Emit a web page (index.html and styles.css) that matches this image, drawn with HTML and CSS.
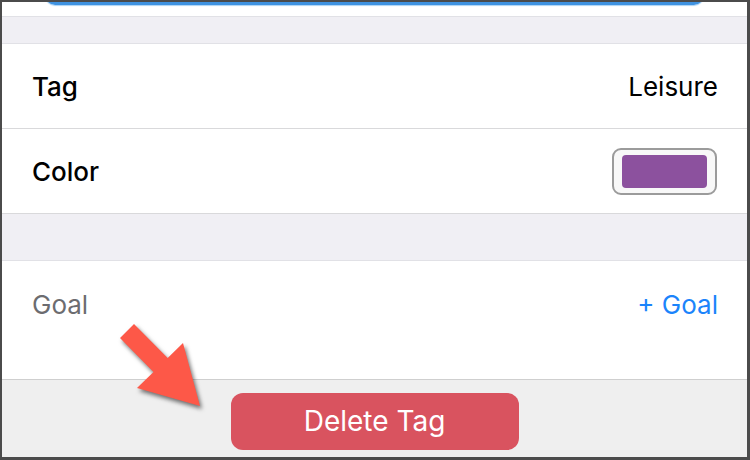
FILE: index.html
```html
<!DOCTYPE html>
<html>
<head>
<meta charset="utf-8">
<link rel="stylesheet" href="styles.css">
</head>
<body>
<div class="frame">
  <div class="top-strip"><div class="field"></div></div>
  <div class="band band-small"></div>
  <div class="row">
    <span class="label">Tag</span>
    <span class="value">Leisure</span>
  </div>
  <div class="row">
    <span class="label">Color</span>
    <span class="swatch"><span class="swatch-fill"></span></span>
  </div>
  <div class="band band-large"></div>
  <div class="row row-goal">
    <span class="label-muted">Goal</span>
    <span class="link">+ Goal</span>
  </div>
  <div class="toolbar">
    <button class="delete">Delete Tag</button>
  </div>
  <svg class="arrow" width="120" height="110" viewBox="100 310 120 110">
    <polygon points="120,338 134,324 167.7,358 183,343 200,406 137,388 153.5,372" fill="#fd5848"/>
  </svg>
</div>
</body>
</html>
```

FILE: styles.css
```css
* { box-sizing: border-box; }
html, body { margin: 0; padding: 0; background: #fff; }
body { font-family: "Inter", "Noto Sans", sans-serif; }

.frame {
  position: relative;
  width: 750px;
  height: 460px;
  border-style: solid;
  border-color: #4b4b4b;
  border-width: 2px 3px 3px 2px;
  background: #fff;
  display: flex;
  flex-direction: column;
  overflow: hidden;
}

.top-strip {
  height: 14px;
  overflow: hidden;
  flex: none;
}
.field {
  height: 40px;
  margin: -37px 43px 0 43px;
  border: 2px solid #3f92e0;
  border-bottom-width: 3px;
  border-radius: 10px;
  box-shadow: 0 1px 1px #a9d2f4;
}

.band {
  flex: none;
  background: #f0eff4;
  border-top: 1px solid #e1e1e6;
  border-bottom: 1px solid #e1e1e6;
}
.band-small { height: 28px; }
.band-large { height: 47px; border-top: none; }

.row {
  flex: none;
  height: 85px;
  display: flex;
  align-items: center;
  justify-content: space-between;
  padding: 0 30px 0 30px;
  border-bottom: 1px solid #d9d9db;
  font-size: 26px;
  color: #000;
}
.row-goal {
  height: 118px;
  align-items: flex-start;
  padding-top: 28px;
  border-bottom: none;
}

.label { font-weight: 500; }
.value { font-weight: 400; margin-right: -1px; }
.label-muted { color: #6c6c70; font-weight: 400; }
.link { color: #1b84fb; font-weight: 400; margin-right: -1px; }

.swatch {
  width: 105px;
  height: 47px;
  border: 2px solid #9b9b9b;
  border-radius: 9px;
  background: #f8f8f8;
  display: flex;
  align-items: center;
  justify-content: center;
}
.swatch-fill {
  width: 85px;
  height: 33px;
  border-radius: 4px;
  background: #8c519e;
}

.toolbar {
  flex: 1;
  background: #efefef;
  border-top: 1px solid #cfcfcf;
  display: flex;
  justify-content: center;
  align-items: flex-start;
  padding-top: 13px;
}
.delete {
  width: 288px;
  height: 57px;
  border: none;
  border-radius: 12px;
  background: #d9535f;
  color: #fff;
  font-family: "Inter", "Noto Sans", sans-serif;
  font-size: 28px;
  font-weight: 400;
  padding: 0 0 1px 0;
}

.arrow {
  position: absolute;
  left: 98px;
  top: 308px;
  filter: drop-shadow(2px 3px 2px rgba(0,0,0,0.55));
}
```
